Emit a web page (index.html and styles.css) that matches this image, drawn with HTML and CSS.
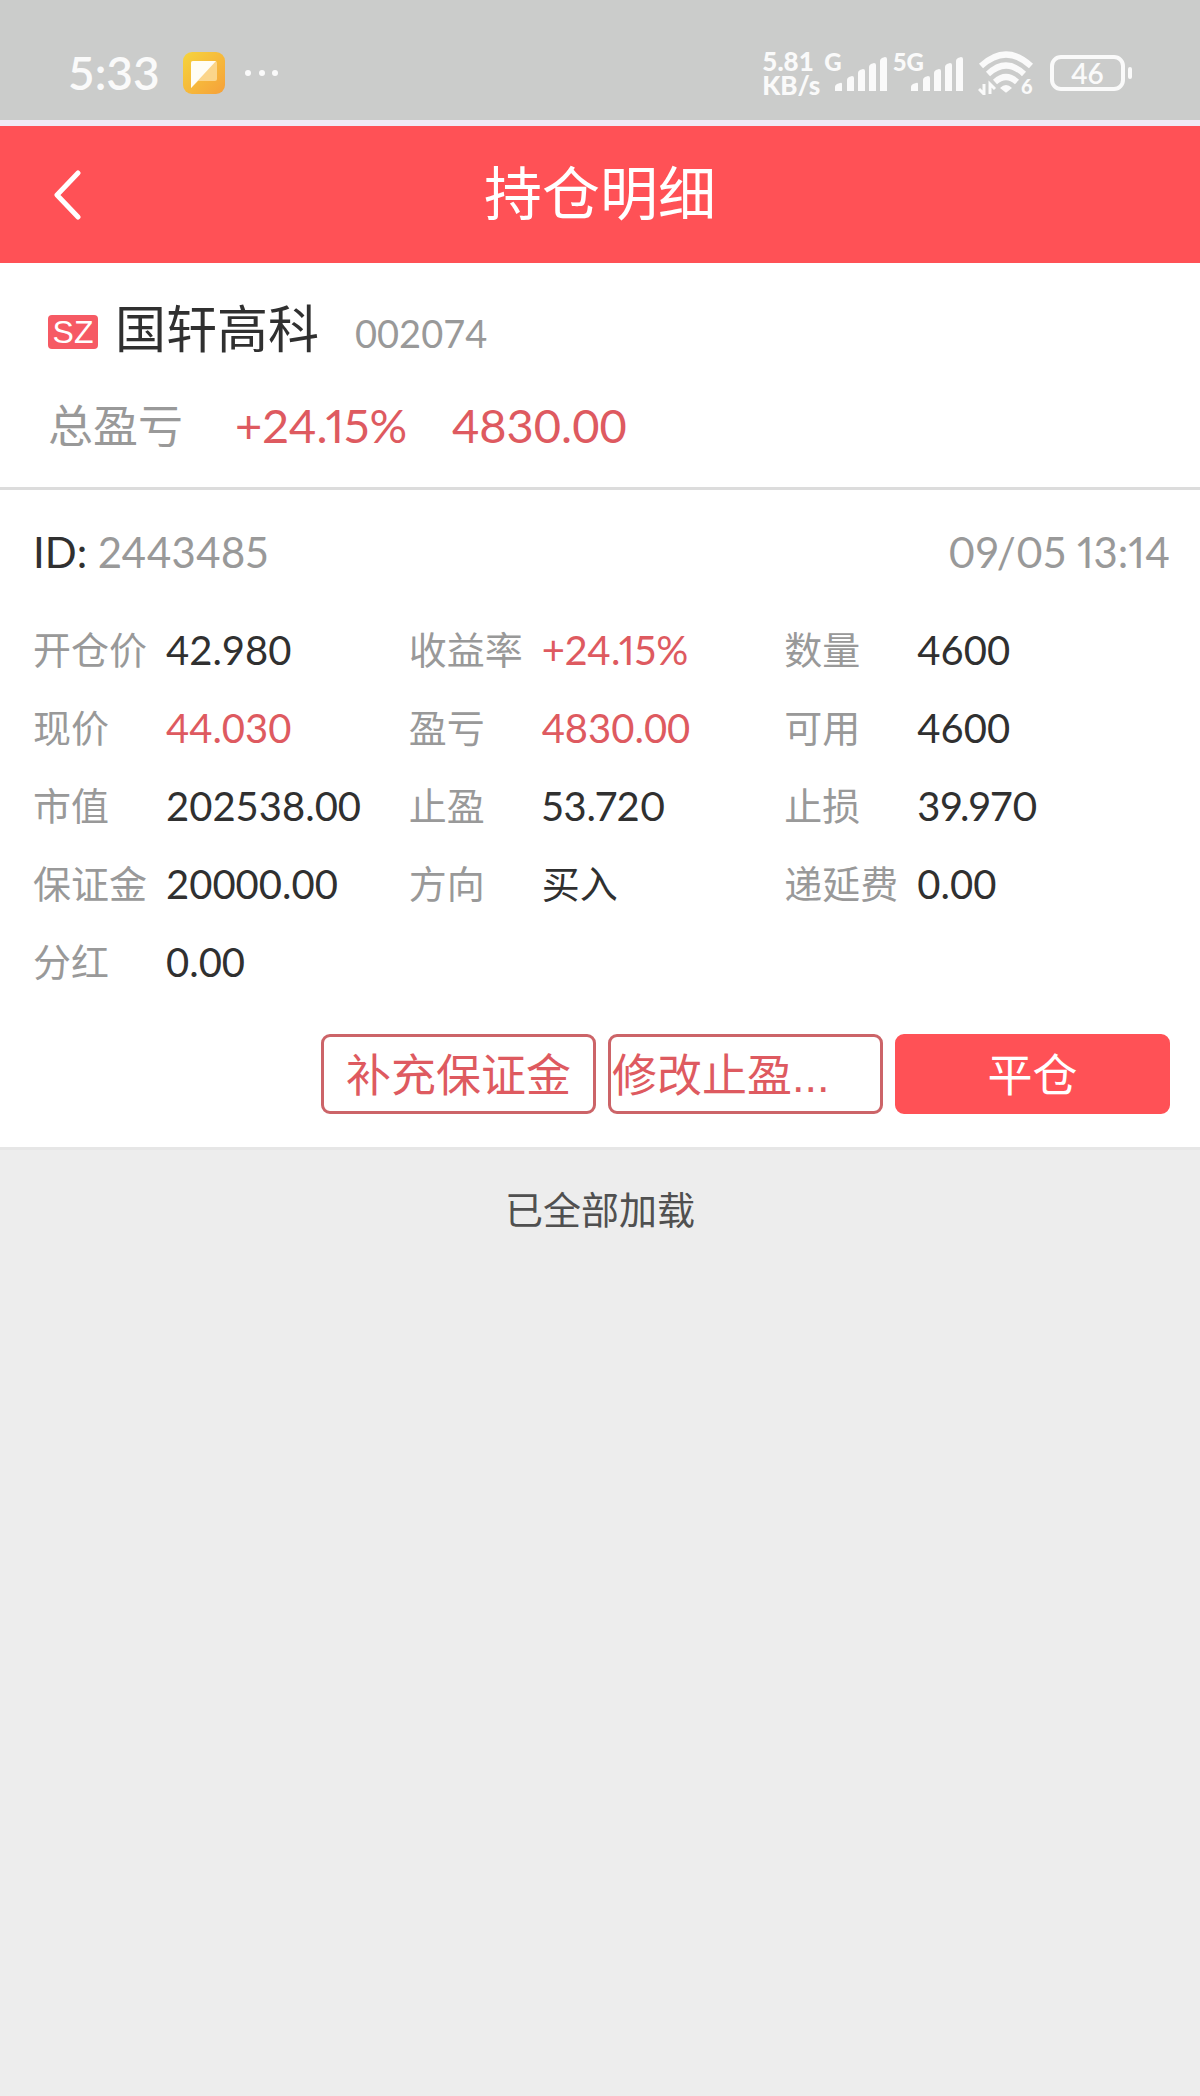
FILE: index.html
```html
<!DOCTYPE html>
<html lang="zh-CN">
<head>
<meta charset="utf-8">
<meta name="viewport" content="width=device-width, initial-scale=1">
<title>持仓明细</title>
<link rel="stylesheet" href="styles.css">
</head>
<body>
<div class="status-bar">
  <div class="status-left">
    <span class="clock">5:33</span>
    <svg class="app-icon" width="44" height="44" viewBox="0 0 44 44" aria-hidden="true">
      <defs>
        <linearGradient id="gold" x1="0" y1="0" x2="1" y2="1">
          <stop offset="0" stop-color="#f6d43c"/>
          <stop offset="1" stop-color="#f6a03a"/>
        </linearGradient>
      </defs>
      <rect x="1" y="1" width="42" height="42" rx="9" fill="url(#gold)"/>
      <path d="M11 10h22q2 0 2 2v16q0 2-2 2H16l-7 7V12q0-2 2-2z" fill="#fbd58a"/>
      <path d="M11 10h23L9 37V12q0-2 2-2z" fill="#fffdf5"/>
    </svg>
    <svg class="more-dots" width="36" height="8" viewBox="0 0 36 8" fill="#fafafa" aria-hidden="true">
      <circle cx="4" cy="4" r="3"/><circle cx="18" cy="4" r="3"/><circle cx="31" cy="4" r="3"/>
    </svg>
  </div>
  <div class="status-right">
    <div class="speed"><span>5.81</span><span>KB/s</span></div>
    <div class="signal">
      <span class="network">G</span>
      <svg width="54" height="36" viewBox="0 0 54 36" fill="#fafafa" aria-hidden="true">
        <path d="M1 35v-4q0-2 2-3l3-1q2-1 2 1v7zM13 35V24q0-2 2-3l3-1q2 0 2 2v13zM24 35V17q0-2 2-3l3-1q2 0 2 2v20zM35 35V11q0-2 2-3l3-1q2 0 2 2v26zM46 35V5q0-2 2-3l3-1q2 0 2 2v32z"/>
      </svg>
    </div>
    <div class="signal">
      <span class="network network-wide">5G</span>
      <svg width="54" height="36" viewBox="0 0 54 36" fill="#fafafa" aria-hidden="true">
        <path d="M1 35v-4q0-2 2-3l3-1q2-1 2 1v7zM13 35V24q0-2 2-3l3-1q2 0 2 2v13zM24 35V17q0-2 2-3l3-1q2 0 2 2v20zM35 35V11q0-2 2-3l3-1q2 0 2 2v26zM46 35V5q0-2 2-3l3-1q2 0 2 2v32z"/>
      </svg>
    </div>
    <svg class="wifi" width="56" height="44" viewBox="0 0 56 44" aria-hidden="true">
      <g fill="none" stroke="#fafafa" stroke-width="6">
        <path d="M3 15Q28-8 53 15"/>
        <path d="M10 23Q28 6 46 23"/>
        <path d="M17 31Q28 21 39 31"/>
      </g>
      <path d="M22 37q6-6 12 0l-5 4q-1 1-2 0z" fill="#fafafa"/>
      <path d="M6 33v10L1 38M12 43V33l5 5" fill="none" stroke="#fafafa" stroke-width="3"/>
      <text x="43" y="43" class="wifi-gen">6</text>
    </svg>
    <div class="battery"><span class="battery-body">46</span><span class="battery-tip"></span></div>
  </div>
</div>

<header class="title-bar">
  <button class="back" type="button" aria-label="返回">
    <svg width="28" height="50" viewBox="0 0 28 50" fill="none" stroke="#fff" stroke-width="5" stroke-linecap="round" stroke-linejoin="round" aria-hidden="true">
      <path d="M25 3L4 25L25 47"/>
    </svg>
  </button>
  <h1>持仓明细</h1>
</header>

<main>
  <section class="summary">
    <div class="stock">
      <span class="market">SZ</span>
      <h2>国轩高科</h2>
      <span class="code">002074</span>
    </div>
    <div class="total">
      <span class="total-label">总盈亏</span>
      <span class="total-rate compact">+24.15%</span>
      <span>4830.00</span>
    </div>
  </section>

  <section class="position">
    <div class="position-head compact">
      <span class="order-id">ID: <span class="muted">2443485</span></span>
      <time class="muted">09/05 13:14</time>
    </div>
    <dl class="fields">
      <div><dt>开仓价</dt><dd>42.980</dd></div>
      <div><dt>收益率</dt><dd class="up compact">+24.15%</dd></div>
      <div><dt>数量</dt><dd>4600</dd></div>
      <div><dt>现价</dt><dd class="up">44.030</dd></div>
      <div><dt>盈亏</dt><dd class="up">4830.00</dd></div>
      <div><dt>可用</dt><dd>4600</dd></div>
      <div><dt>市值</dt><dd>202538.00</dd></div>
      <div><dt>止盈</dt><dd class="compact">53.720</dd></div>
      <div><dt>止损</dt><dd class="compact">39.970</dd></div>
      <div><dt>保证金</dt><dd>20000.00</dd></div>
      <div><dt>方向</dt><dd class="word">买入</dd></div>
      <div><dt>递延费</dt><dd>0.00</dd></div>
      <div><dt>分红</dt><dd>0.00</dd></div>
    </dl>
    <div class="actions">
      <button class="action" type="button">补充保证金</button>
      <button class="action action-start" type="button">修改止盈...</button>
      <button class="action action-solid" type="button">平仓</button>
    </div>
  </section>

  <p class="loaded">已全部加载</p>
</main>
</body>
</html>
```
FILE: styles.css
```css
* {
  box-sizing: border-box;
}

body {
  margin: 0;
  min-height: 100vh;
  background: #ededed;
  color: #303030;
  font-family: Lato, "Noto Sans CJK SC", sans-serif;
  font-size: 40px;
}

h1, h2, p, dl, dd {
  margin: 0;
  font-weight: 400;
}

button {
  font: inherit;
  padding: 0;
  border: 0;
  background: none;
}

svg {
  display: block;
}

.compact {
  font-variant-numeric: proportional-nums;
}

/* Status bar */
.status-bar {
  display: flex;
  justify-content: space-between;
  height: 126px;
  padding: 26px 68px 0;
  background: #cbcccb;
  border-bottom: 6px solid #f1eaf4;
  color: #fafafa;
}

.status-left,
.status-right {
  display: flex;
  align-items: center;
  height: 94px;
}

.clock {
  width: 92px;
  font-size: 46px;
  font-weight: 600;
  line-height: 48px;
}

.app-icon {
  margin-left: 22px;
}

.more-dots {
  margin-left: 18px;
}

.speed {
  display: flex;
  flex-direction: column;
  width: 62px;
  font: 900 26px/24px Lato, sans-serif;
}

.signal {
  display: flex;
  align-items: flex-end;
  height: 42px;
  margin-bottom: 4px;
}

.signal + .signal {
  margin-left: 5px;
}

.network {
  align-self: flex-start;
  font: 900 24px/24px Lato, sans-serif;
  margin-right: -8px;
}

.network-wide {
  margin-right: -14px;
}

.wifi {
  margin-left: 14px;
}

.wifi-gen {
  font: 900 20px Lato, sans-serif;
  fill: #fafafa;
}

.battery {
  display: flex;
  align-items: center;
  gap: 3px;
  margin-left: 16px;
}

.battery-body {
  width: 75px;
  height: 36px;
  border: 4px solid #fafafa;
  border-radius: 11px;
  font-size: 28px;
  font-weight: 600;
  line-height: 28px;
  text-align: center;
}

.battery-tip {
  width: 4px;
  height: 12px;
  border-radius: 2px;
  background: #fafafa;
}

/* Title bar */
.title-bar {
  display: grid;
  grid-template-columns: 1fr auto 1fr;
  align-items: center;
  height: 137px;
  padding: 0 53px;
  background: #ff5156;
  color: #fff;
}

.back {
  justify-self: start;
}

.title-bar h1 {
  padding-bottom: 4px;
  font-size: 58px;
  line-height: 80px;
}

/* Stock summary */
.summary {
  padding: 26px 48px 22px;
  background: #fff;
  border-bottom: 3px solid #dcdcdc;
}

.stock {
  display: flex;
  align-items: center;
  height: 80px;
}

.market {
  width: 50px;
  height: 34px;
  border-radius: 4px;
  background: #f65a64;
  color: #fff;
  font: 32px/34px "Liberation Sans", sans-serif;
  text-align: center;
  margin-top: 6px;
}

.stock h2 {
  margin-left: 17px;
  font-size: 51px;
  line-height: 80px;
}

.code {
  margin: 8px 0 0 36px;
  color: #999;
  font-size: 38px;
}

.total {
  display: flex;
  align-items: center;
  height: 80px;
  margin-top: 16px;
  color: #de5a60;
  font-size: 47px;
}

.total-label {
  width: 187px;
  padding-bottom: 4px;
  color: #999;
  font-size: 45px;
}

.total-rate {
  width: 217px;
}

/* Position card */
.position {
  padding: 32px 30px 33px 33px;
  background: #fff;
  border-bottom: 3px solid #e6e6e6;
}

.position-head {
  display: flex;
  justify-content: space-between;
  font-size: 42px;
  line-height: 60px;
}

.muted {
  color: #999;
}

.fields {
  display: grid;
  grid-template-columns: repeat(3, 1fr);
  grid-auto-rows: 78px;
  margin: 29px 10px 0 0;
}

.fields div {
  display: flex;
  align-items: center;
}

.fields dt {
  width: 133px;
  padding-bottom: 6px;
  color: #999;
  font-size: 38px;
}

.fields .word {
  padding-bottom: 6px;
  font-size: 38px;
}

.up {
  color: #de5a60;
}

.actions {
  display: flex;
  justify-content: flex-end;
  gap: 12px;
  margin-top: 33px;
}

.action {
  width: 275px;
  height: 80px;
  padding-bottom: 4px;
  border: 3px solid #cc6468;
  border-radius: 9px;
  color: #de5a60;
  font-size: 45px;
  white-space: nowrap;
}

.action-start {
  padding-left: 1px;
  font-family: "Liberation Sans", "Noto Sans CJK SC", sans-serif;
  text-align: left;
}

.action-solid {
  border-color: #ff5156;
  background: #ff5156;
  color: #fff;
}

.loaded {
  padding: 29px 0;
  color: #505050;
  font-size: 38px;
  line-height: 60px;
  text-align: center;
}
```
